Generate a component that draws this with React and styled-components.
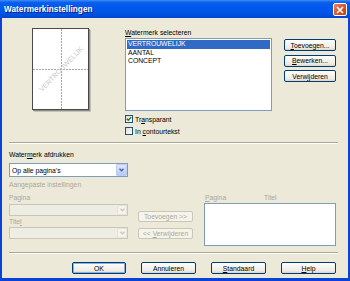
import React from 'react';
import styled, { createGlobalStyle, css } from 'styled-components';

const GlobalStyle = createGlobalStyle`
  html, body { margin: 0; padding: 0; background: #ECE9D8; }
  body {
    font-family: "Liberation Sans", Arial, sans-serif;
    font-size: 6.8px;
    color: #000;
  }
  u { text-decoration-thickness: 1px; text-underline-offset: 1px; }
`;

const Window = styled.div`
  width: 350px;
  height: 281px;
  display: flex;
  flex-direction: column;
  overflow: hidden;
`;

const TitleBar = styled.div`
  height: 18px;
  flex: none;
  display: flex;
  align-items: center;
  justify-content: space-between;
  padding: 1px 3px 0 4px;
  box-sizing: border-box;
  background: linear-gradient(#3D8DF7 0%, #0A5EEC 14%, #0058EE 40%, #0055E5 72%, #0046D2 100%);
`;

const Title = styled.span`
  color: #fff;
  font-weight: bold;
  font-size: 8.2px;
  text-shadow: 1px 1px 0 #0A1E80;
  letter-spacing: 0.05px;
`;

const CloseButton = styled.div`
  width: 14px;
  height: 13px;
  box-sizing: border-box;
  border: 1px solid #fff;
  border-radius: 2px;
  background: linear-gradient(135deg, #E9866A 0%, #DA5A33 45%, #C0400F 100%);
  display: flex;
  align-items: center;
  justify-content: center;
`;

const Frame = styled.div`
  flex: 1;
  background: #ECE9D8;
  border-left: 2px solid #0842D6;
  border-right: 2px solid #0842D6;
  border-bottom: 3px solid #0842D6;
  padding: 10px 10px 0 7px;
  display: flex;
  flex-direction: column;
`;

const TopSection = styled.div`
  height: 114px;
  display: flex;
`;

const PreviewColumn = styled.div`
  width: 116px;
  flex: none;
  padding-left: 23px;
  box-sizing: border-box;
`;

const Page = styled.div`
  position: relative;
  width: 57px;
  height: 82px;
  box-sizing: border-box;
  background: #fff;
  border: 1px solid #4A4A4A;
  box-shadow: 1px 1px 0 #8E8E8E, 2px 2px 0 #C4C2B6;
  overflow: hidden;
  &::before {
    content: '';
    position: absolute;
    left: 27.5px;
    top: 0;
    bottom: 0;
    width: 1px;
    background: repeating-linear-gradient(to bottom, #A4A4A4 0 2px, transparent 2px 3px);
  }
  &::after {
    content: '';
    position: absolute;
    top: 39.5px;
    left: 0;
    right: 0;
    height: 1px;
    background: repeating-linear-gradient(to right, #A4A4A4 0 2px, transparent 2px 3px);
  }
`;

const Watermark = styled.span`
  position: absolute;
  left: 50%;
  top: 50%;
  transform: translate(-50%, -50%) rotate(-46deg);
  color: #C6C6C6;
  font-size: 7px;
  white-space: nowrap;
  z-index: 1;
`;

const SelectGrid = styled.div`
  display: grid;
  grid-template-columns: 147px 52px;
  column-gap: 12px;
  align-content: start;
`;

const Label = styled.div`
  line-height: ${({ $lh }) => $lh || 10}px;
  margin-top: ${({ $mt }) => $mt || 0}px;
  color: ${({ $disabled }) => ($disabled ? '#ACA899' : '#000')};
  white-space: nowrap;
`;

const ListBox = styled.div`
  height: ${({ $h }) => $h}px;
  margin-top: ${({ $mt }) => $mt || 0}px;
  box-sizing: border-box;
  border: 1px solid #7F9DB9;
  background: #fff;
  padding: 1px;
`;

const ListItem = styled.div`
  line-height: 8.5px;
  padding-left: 1px;
  ${({ $selected }) =>
    $selected &&
    css`
      background: #316AC5;
      color: #fff;
    `}
`;

const ButtonStack = styled.div`
  margin-top: ${({ $mt }) => $mt || 0}px;
  display: flex;
  flex-direction: column;
  gap: ${({ $gap }) => $gap || 0}px;
`;

const Button = styled.div`
  height: ${({ $h }) => $h || 12}px;
  width: ${({ $w }) => ($w ? `${$w}px` : 'auto')};
  box-sizing: border-box;
  border: 1px solid #003C74;
  border-radius: 2px;
  background: linear-gradient(#FFFFFF 0%, #F5F4EE 40%, #ECEBE5 80%, #D8D4C8 100%);
  display: flex;
  align-items: center;
  justify-content: center;
  white-space: nowrap;
  ${({ $default }) =>
    $default &&
    css`
      box-shadow: inset 0 0 0 1px #8AAFE8;
    `}
  ${({ $disabled }) =>
    $disabled &&
    css`
      border-color: #C9C7BA;
      background: #F5F4EA;
      color: #ACA899;
    `}
`;

const CheckList = styled.div`
  margin-top: 4px;
  display: flex;
  flex-direction: column;
  gap: 4px;
`;

const CheckRow = styled.label`
  height: 8px;
  display: flex;
  align-items: center;
  gap: 2px;
`;

const CheckBox = styled.span`
  width: 8px;
  height: 8px;
  box-sizing: border-box;
  border: 1px solid #1C5180;
  background: linear-gradient(135deg, #DCDBD5, #FFFFFF);
  display: flex;
  align-items: center;
  justify-content: center;
`;

const Separator = styled.div`
  flex: none;
  border-top: 1px solid #ACA899;
  border-bottom: 1px solid #FFFFFF;
`;

const LowerSection = styled.div`
  height: 108px;
  display: flex;
`;

const Column = styled.div`
  width: ${({ $w }) => $w}px;
  margin-left: ${({ $ml }) => $ml || 0}px;
  flex: none;
  display: flex;
  flex-direction: column;
`;

const Combo = styled.div`
  height: ${({ $h }) => $h}px;
  margin-top: ${({ $mt }) => $mt || 0}px;
  box-sizing: border-box;
  border: 1px solid ${({ $disabled }) => ($disabled ? '#C9C7BA' : '#7F9DB9')};
  background: ${({ $disabled }) => ($disabled ? '#EEEDE3' : '#fff')};
  display: flex;
  align-items: center;
  justify-content: space-between;
  padding-left: 2px;
`;

const ComboArrow = styled.span`
  align-self: stretch;
  width: ${({ $w }) => $w}px;
  box-sizing: border-box;
  border-radius: 1px;
  display: flex;
  align-items: center;
  justify-content: center;
  ${({ $disabled }) =>
    $disabled
      ? css`
          background: #F4F3EE;
          border: 1px solid #E6E4DA;
        `
      : css`
          background: linear-gradient(#DCE6FC, #B7CAF6);
          border: 1px solid #B9CDF8;
        `}
`;

const ListHeader = styled.div`
  margin-top: 49px;
  line-height: 10px;
  color: #ACA899;
  display: flex;
  padding-left: 1px;
`;

const HeaderCell = styled.span`
  width: ${({ $w }) => ($w ? `${$w}px` : 'auto')};
`;

const Footer = styled.div`
  display: flex;
  justify-content: flex-end;
  gap: 15px;
  padding: 8px 2px 0 0;
`;

const Chevron = ({ color }) => (
  <svg width="5" height="4" viewBox="0 0 5 4">
    <polyline points="0.5,0.8 2.5,2.8 4.5,0.8" fill="none" stroke={color} strokeWidth="1.3" />
  </svg>
);

const Check = ({ checked, children }) => (
  <CheckRow>
    <CheckBox>
      {checked && (
        <svg width="6" height="6" viewBox="0 0 6 6">
          <polyline points="0.8,2.8 2.3,4.3 5.2,1.2" fill="none" stroke="#2F6B2F" strokeWidth="1.3" />
        </svg>
      )}
    </CheckBox>
    <span>{children}</span>
  </CheckRow>
);

export default function App() {
  return (
    <Window>
      <GlobalStyle />
      <TitleBar>
        <Title>Watermerkinstellingen</Title>
        <CloseButton>
          <svg width="8" height="8" viewBox="0 0 8 8">
            <path d="M1 1 L7 7 M7 1 L1 7" stroke="#fff" strokeWidth="1.6" />
          </svg>
        </CloseButton>
      </TitleBar>
      <Frame>
        <TopSection>
          <PreviewColumn>
            <Page>
              <Watermark>VERTROUWELIJK</Watermark>
            </Page>
          </PreviewColumn>
          <SelectGrid>
            <Label $lh={8} $mt={1}>
              <u>W</u>atermerk selecteren
            </Label>
            <span />
            <ListBox $h={73} $mt={1}>
              <ListItem $selected>VERTROUWELIJK</ListItem>
              <ListItem>AANTAL</ListItem>
              <ListItem>CONCEPT</ListItem>
            </ListBox>
            <ButtonStack $mt={2} $gap={3.5}>
              <Button>
                <span><u>T</u>oevoegen...</span>
              </Button>
              <Button>
                <span><u>B</u>ewerken...</span>
              </Button>
              <Button>
                <span>Verw<u>ij</u>deren</span>
              </Button>
            </ButtonStack>
            <CheckList>
              <Check checked>
                Tr<u>a</u>nsparant
              </Check>
              <Check>
                In <u>c</u>ontourtekst
              </Check>
            </CheckList>
          </SelectGrid>
        </TopSection>
        <Separator />
        <LowerSection>
          <Column $w={119}>
            <Label $mt={6}>
              Water<u>m</u>erk afdrukken
            </Label>
            <Combo $h={14} $mt={3}>
              <span>Op alle pagina's</span>
              <ComboArrow $w={11}>
                <Chevron color="#4D6185" />
              </ComboArrow>
            </Combo>
            <Label $mt={3} $disabled>
              Aangepaste instellingen
            </Label>
            <Label $mt={3} $disabled>
              Pagina
            </Label>
            <Combo $h={12} $mt={1} $disabled>
              <span />
              <ComboArrow $w={10} $disabled>
                <Chevron color="#C9C7BA" />
              </ComboArrow>
            </Combo>
            <Label $mt={1} $disabled>
              Tite<u>l</u>
            </Label>
            <Combo $h={12} $disabled>
              <span />
              <ComboArrow $w={10} $disabled>
                <Chevron color="#C9C7BA" />
              </ComboArrow>
            </Combo>
          </Column>
          <Column $w={55} $ml={10}>
            <ButtonStack $mt={67} $gap={6}>
              <Button $h={11} $disabled>
                Toevoegen &gt;&gt;
              </Button>
              <Button $h={11} $disabled>
                <span>&lt;&lt; <u>V</u>erwijderen</span>
              </Button>
            </ButtonStack>
          </Column>
          <Column $w={132} $ml={11}>
            <ListHeader>
              <HeaderCell $w={59}>
                <u>P</u>agina
              </HeaderCell>
              <HeaderCell>Titel</HeaderCell>
            </ListHeader>
            <ListBox $h={43} />
          </Column>
        </LowerSection>
        <Separator />
        <Footer>
          <Button $w={54} $default>
            OK
          </Button>
          <Button $w={55}>Annuleren</Button>
          <Button $w={55}>
            <span><u>S</u>tandaard</span>
          </Button>
          <Button $w={55}>
            <span><u>H</u>elp</span>
          </Button>
        </Footer>
      </Frame>
    </Window>
  );
}
